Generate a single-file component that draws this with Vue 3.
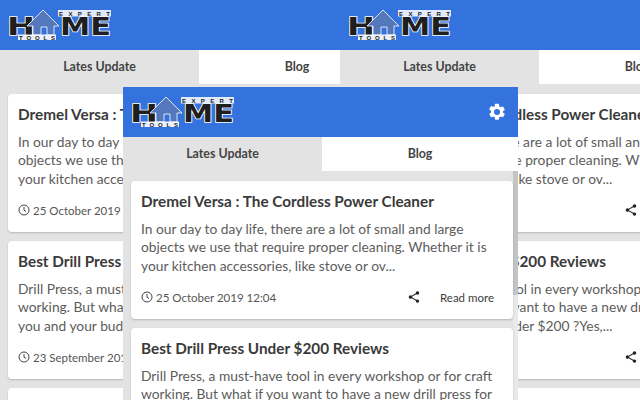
<template>
  <div class="stage">
    <section v-for="win in windows" :key="win" class="popup" :class="win">
      <header class="topbar">
        <svg class="logo" viewBox="0 0 102 30" width="102" height="30">
          <text x="-2" y="25" class="logo-big" textLength="28" lengthAdjust="spacingAndGlyphs">H</text>
          <text x="51" y="25" class="logo-big" textLength="51" lengthAdjust="spacingAndGlyphs">ME</text>
          <rect x="49" y="0" width="53" height="6.5" fill="#fff" opacity="0.85" />
          <text x="50" y="5.8" class="logo-small" textLength="51">EXPERT</text>
          <path d="M34 0 L50 16 L45 16 L45 25 L38 25 L38 17 L32 17 L32 25 L24 25 L24 16 L18 16 Z" fill="#5478bb" stroke="#fff" stroke-width="0.8" />
          <rect x="9" y="24.5" width="38" height="5.5" fill="#fff" opacity="0.9" />
          <text x="10" y="30" class="logo-small" textLength="36">TOOLS</text>
        </svg>
        <svg class="gear" viewBox="0 0 24 24" width="20" height="20">
          <path fill="#fff" d="M19.14 12.94c.04-.3.06-.61.06-.94s-.02-.64-.07-.94l2.03-1.58a.49.49 0 0 0 .12-.61l-1.92-3.32a.49.49 0 0 0-.59-.22l-2.39.96a7 7 0 0 0-1.62-.94l-.36-2.54A.48.48 0 0 0 13.92 2h-3.84a.47.47 0 0 0-.47.41l-.36 2.54c-.59.24-1.13.57-1.62.94l-2.39-.96a.48.48 0 0 0-.59.22L2.73 8.47a.47.47 0 0 0 .12.61l2.03 1.58c-.05.3-.08.63-.08.94s.02.64.07.94l-2.03 1.58a.49.49 0 0 0-.12.61l1.92 3.32c.12.22.37.29.59.22l2.39-.96c.5.38 1.03.7 1.62.94l.36 2.54c.05.24.24.41.48.41h3.84c.24 0 .44-.17.47-.41l.36-2.54a7 7 0 0 0 1.62-.94l2.39.96c.22.08.47 0 .59-.22l1.92-3.32a.47.47 0 0 0-.12-.61l-2.01-1.58zM12 15.6A3.6 3.6 0 1 1 12 8.4a3.6 3.6 0 0 1 0 7.2z" />
        </svg>
      </header>
      <nav class="tabs">
        <div class="tab active">Lates Update</div>
        <div class="tab">Blog</div>
      </nav>
      <div class="list">
        <article v-for="post in posts" :key="post.title" class="card">
          <h2 class="title">{{ post.title }}</h2>
          <p class="body">{{ post.body }}</p>
          <footer class="meta">
            <svg class="clock" viewBox="0 0 12 12" width="12" height="12">
              <circle cx="6" cy="6" r="5" fill="none" stroke="#444" stroke-width="1" />
              <path d="M6 3v3.2l2 1.2" fill="none" stroke="#444" stroke-width="1" />
            </svg>
            <span class="date">{{ post.date }}</span>
            <svg class="share" viewBox="0 0 24 24" width="14" height="14">
              <path fill="#222" d="M18 16.08c-.76 0-1.44.3-1.96.77L8.91 12.7c.05-.23.09-.46.09-.7s-.04-.47-.09-.7l7.05-4.11A2.99 2.99 0 0 0 21 5a3 3 0 1 0-6 0c0 .24.04.47.09.7L8.04 9.81A3 3 0 1 0 8.04 14.15l7.12 4.16c-.05.21-.08.43-.08.65A2.92 2.92 0 1 0 18 16.08z" />
            </svg>
            <span class="more">Read more</span>
          </footer>
        </article>
      </div>
    </section>
  </div>
</template>

<script setup>
const windows = ['left', 'right', 'front']

const posts = [
  {
    title: 'Dremel Versa : The Cordless Power Cleaner',
    body: 'In our day to day life, there are a lot of small and large\nobjects we use that require proper cleaning. Whether it is\nyour kitchen accessories, like stove or ov...',
    date: '25 October 2019 12:04'
  },
  {
    title: 'Best Drill Press Under $200 Reviews',
    body: 'Drill Press, a must-have tool in every workshop or for craft\nworking. But what if you want to have a new drill press for\nyou and your budget is under $200 ?Yes,...',
    date: '23 September 2019 12:04'
  },
  {
    title: 'Best Cordless Drill Reviews',
    body: 'A cordless drill is a tool for every home and workshop.',
    date: '20 September 2019 12:04'
  }
]
</script>

<style>
html, body { background: #e3e3e3; }
</style>

<style scoped>
.stage {
  position: relative;
  width: 640px;
  height: 400px;
  overflow: hidden;
  font-family: Lato, "Noto Sans", sans-serif;
  color: #3a3a3a;
}

.popup {
  position: absolute;
  width: 395px;
  height: 400px;
  display: flex;
  flex-direction: column;
  background: #e3e3e3;
  overflow: hidden;
}
.left { left: 0; top: 0; }
.right { left: 340px; top: 0; }
.front { left: 123px; top: 87px; height: 313px; }

.topbar {
  height: 50px;
  flex: none;
  display: flex;
  align-items: center;
  justify-content: space-between;
  padding: 0 11px 0 9px;
  background: #3472de;
}

.logo-big {
  font: 700 25px "DejaVu Sans", sans-serif;
  fill: #1f1f22;
  stroke: #fff;
  stroke-width: 1.4px;
  paint-order: stroke;
}
.logo-small {
  font: 700 6px "Liberation Sans", sans-serif;
  fill: #222;
}

.tabs {
  height: 34px;
  flex: none;
  display: flex;
  background: #fff;
}
.tab {
  flex: 1;
  display: flex;
  align-items: center;
  justify-content: center;
  padding-bottom: 2px;
  box-sizing: border-box;
  font-size: 12.4px;
  font-weight: 700;
  color: #444;
}
.tab.active {
  flex: none;
  width: 199px;
  background: #e3e3e3;
}

.list {
  flex: 1;
  min-height: 0;
  padding: 10px 5px 0 8px;
  overflow: hidden;
}
.front .list {
  background: linear-gradient(#c4c4c4, #c4c4c4) right top / 5px 124px no-repeat, linear-gradient(#e9e9e9, #e9e9e9) right top / 5px 100% no-repeat;
}

.card {
  display: flex;
  flex-direction: column;
  height: 138px;
  box-sizing: border-box;
  margin-bottom: 9px;
  padding: 10px 19px 15px 10px;
  background: #fff;
  border-radius: 4px;
  box-shadow: 0 1px 2px rgba(0, 0, 0, 0.2);
}

.title {
  margin: 0 0 8px;
  font-size: 15.3px;
  line-height: 21px;
  font-weight: 700;
  white-space: nowrap;
}

.body {
  margin: 0;
  font-size: 13.8px;
  line-height: 18.3px;
  color: #5c5c5c;
  white-space: pre;
}

.meta {
  margin-top: auto;
  display: flex;
  align-items: center;
  font-size: 11.5px;
  color: #555;
}
.clock { margin-right: 3px; }
.share { margin-left: auto; margin-right: 19px; }
.more { color: #3d3d3d; }
</style>
